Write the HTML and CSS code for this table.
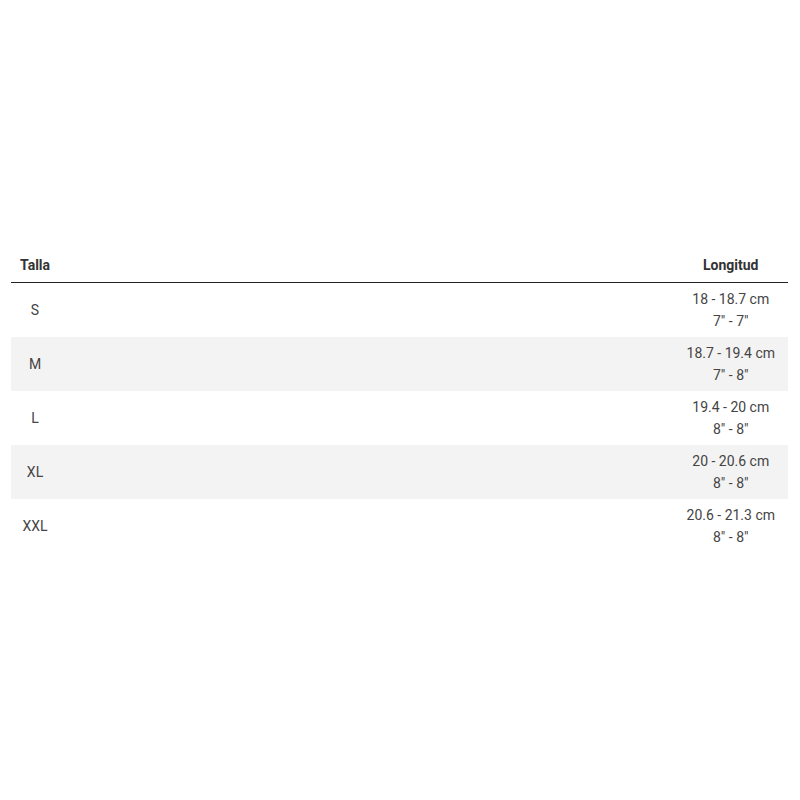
FILE: index.html
```html
<!DOCTYPE html>
<html lang="es">
<head>
<meta charset="utf-8">
<link rel="stylesheet" href="styles.css">
</head>
<body>
<div class="wrap">
<table class="sizes">
  <thead>
    <tr><th class="c1">Talla</th><th class="fill"></th><th class="c3">Longitud</th></tr>
  </thead>
  <tbody>
    <tr><td class="c1">S</td><td class="fill"></td><td class="c3">18 - 18.7 cm<br>7" - 7"</td></tr>
    <tr class="alt"><td class="c1">M</td><td class="fill"></td><td class="c3">18.7 - 19.4 cm<br>7" - 8"</td></tr>
    <tr><td class="c1">L</td><td class="fill"></td><td class="c3">19.4 - 20 cm<br>8" - 8"</td></tr>
    <tr class="alt"><td class="c1">XL</td><td class="fill"></td><td class="c3">20 - 20.6 cm<br>8" - 8"</td></tr>
    <tr><td class="c1">XXL</td><td class="fill"></td><td class="c3">20.6 - 21.3 cm<br>8" - 8"</td></tr>
  </tbody>
</table>
</div>
</body>
</html>
```
FILE: styles.css
```css
html, body { margin: 0; padding: 0; background: #fff; }
body { font-family: Roboto, "Liberation Sans", sans-serif; color: #444; font-size: 14px; }
.wrap { padding: 248px 12px 0 11px; }
.sizes { width: 777px; border-collapse: collapse; }
.sizes th { font-weight: 700; height: 34px; border-bottom: 1px solid #222; color: #333; vertical-align: middle; }
.sizes td { height: 54px; line-height: 22px; vertical-align: middle; box-sizing: border-box; }
.sizes .c1 { text-align: center; width: 25px; padding: 0 11px 0 9px; }
.sizes .fill { width: 100%; padding: 0; }
.sizes .c3 { text-align: center; white-space: nowrap; padding: 0 13px; }
.sizes tr.alt td { background: #f3f3f3; }
```
